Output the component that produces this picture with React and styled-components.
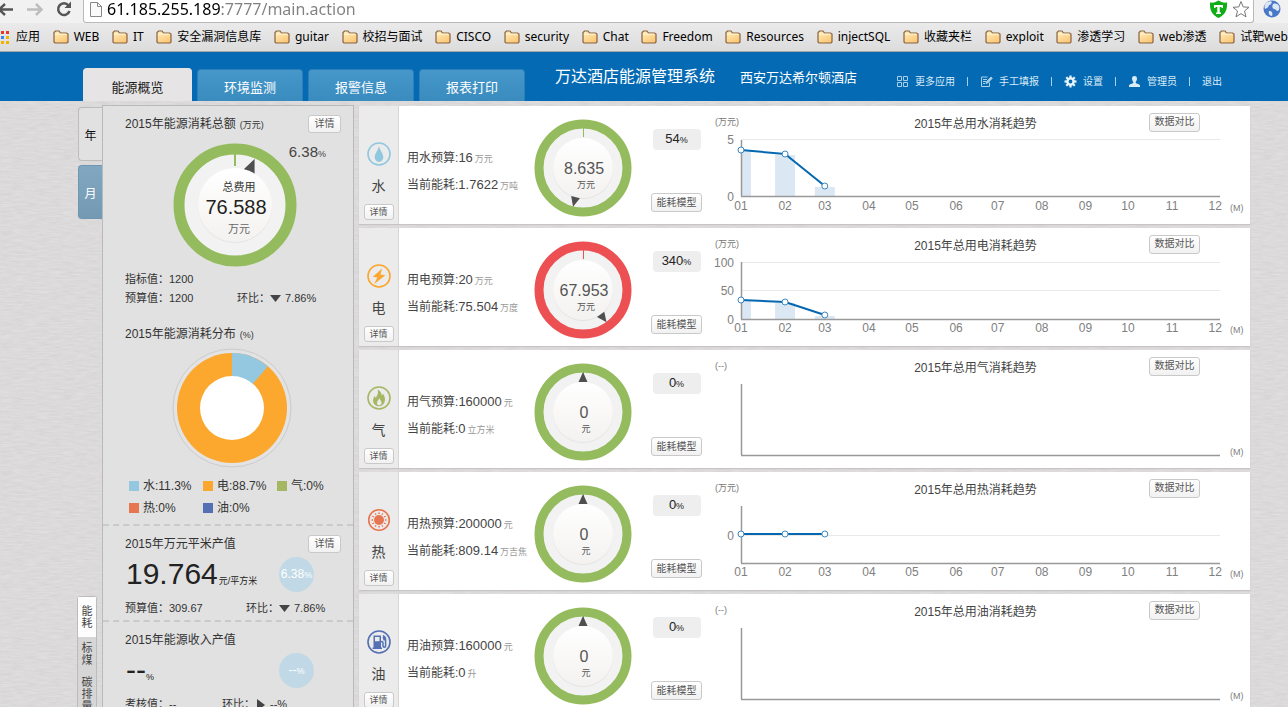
import React from "react";
import styled, { createGlobalStyle } from "styled-components";

const sans = `"Liberation Sans", "Noto Sans CJK SC", sans-serif`;
const chromeSans = `"Noto Sans", "Noto Sans CJK SC", sans-serif`;
const green = "#94bb5e";
const red = "#ec5052";

const paper = `url("data:image/svg+xml,%3Csvg xmlns='http://www.w3.org/2000/svg' width='240' height='240'%3E%3Cfilter id='n'%3E%3CfeTurbulence type='fractalNoise' baseFrequency='0.08 0.6' numOctaves='3' stitchTiles='stitch'/%3E%3CfeColorMatrix values='0 0 0 0 0.45 0 0 0 0 0.43 0 0 0 0 0.44 0.35 0 0 0 -0.08'/%3E%3C/filter%3E%3Crect width='240' height='240' filter='url(%23n)'/%3E%3C/svg%3E")`;

const GlobalStyle = createGlobalStyle`
  * { box-sizing: border-box; }
  html, body { margin: 0; height: 100%; overflow: hidden; }
  body { font-family: ${sans}; font-size: 12px; color: #333; background: #e0dedf; }
  button, input { font-family: inherit; margin: 0; }
  h1, h2, h3, p, ul, dl, dd { margin: 0; padding: 0; font-weight: 400; }
  svg { display: block; }
`;

/* ---------- browser chrome ---------- */
const Toolbar = styled.div`
  display: flex;
  height: 23px;
  background: #f1f1f1;
  font-family: ${chromeSans};
`;
const NavButtons = styled.div`
  display: flex;
  width: 83px;
  justify-content: space-between;
  padding-right: 11px;
`;
const ChromeButton = styled.button`
  display: block;
  border: 0;
  padding: 0;
  background: none;
  height: 19px;
`;
const AddressBar = styled.div`
  display: flex;
  flex: 1;
  gap: 5px;
  padding: 0 3px 0 6px;
  background: #fff;
  border: 1px solid #b9b9b9;
  border-top: 0;
  border-radius: 0 0 3px 3px;
`;
const Address = styled.input`
  flex: 1;
  min-width: 0;
  height: 19px;
  border: 0;
  padding: 0;
  outline: 0;
  font-size: 16px;
  line-height: 19px;
  color: #333;
  background: linear-gradient(90deg, #000 113px, #808080 113px);
  background-clip: text;
  -webkit-text-fill-color: transparent;
`;
const Extensions = styled.div`
  width: 34px;
  padding-left: 9px;
`;
const Bookmarks = styled.nav`
  display: flex;
  justify-content: space-between;
  height: 29px;
  align-items: center;
  overflow: hidden;
  background: linear-gradient(#eaeaea, #dcdcdc);
  border-bottom: 1px solid #a3a5a7;
  font-family: ${chromeSans};
`;
const Bookmark = styled.a`
  display: flex;
  flex: none;
  align-items: center;
  gap: 5px;
  color: #000;
  line-height: 18px;
  text-decoration: none;
  white-space: nowrap;
`;

/* ---------- header ---------- */
const Header = styled.header`
  display: flex;
  height: 49px;
  padding: 0 66px 0 83px;
  background: #046ab3;
  color: #fff;
`;
const Tabs = styled.nav`
  display: flex;
  align-items: flex-end;
  gap: 5px;
`;
const Tab = styled.button`
  width: ${(p) => (p.$active ? 109 : 106)}px;
  height: ${(p) => (p.$active ? 33 : 32)}px;
  padding: 2px 0 0;
  border: 1px solid ${(p) => (p.$active ? "#e6e4e5" : "#2d7fb9")};
  border-bottom: 0;
  border-radius: 4px 4px 0 0;
  background: ${(p) => (p.$active ? "#e6e4e5" : "linear-gradient(#4598c9, #3a8bbe)")};
  color: ${(p) => (p.$active ? "#222" : "#fff")};
  font-size: 13px;
`;
const SystemName = styled.h1`
  margin-left: 30px;
  font-size: 16px;
  line-height: 49px;
  white-space: nowrap;
`;
const HotelName = styled.p`
  margin-left: 25px;
  font-size: 13px;
  line-height: 51px;
  white-space: nowrap;
`;
const Links = styled.nav`
  display: flex;
  align-items: center;
  margin-left: auto;
  padding-top: 10px;
`;
const HeaderLink = styled.a`
  display: flex;
  align-items: center;
  gap: 6px;
  padding-right: 12px;
  color: #d9ebf7;
  font-size: 10px;
  line-height: 14px;
  text-decoration: none;
  white-space: nowrap;
  &:last-child { padding-right: 0; }
  & + &::before {
    content: "";
    width: 1px;
    height: 9px;
    margin-right: 6px;
    background: #a9d0ea;
  }
`;

/* ---------- page ---------- */
const Page = styled.div`
  display: flex;
  flex-direction: column;
  height: 100vh;
  overflow: hidden;
`;
const Main = styled.main`
  display: flex;
  flex: 1;
  align-items: flex-start;
  min-height: 0;
  padding: 4px 38px 0 77px;
  background: ${paper} #e0dedf;
`;
const SideTabs = styled.div`
  width: 25px;
  padding-top: 2px;
`;
const PeriodTab = styled.button`
  display: block;
  width: 24px;
  height: 54px;
  margin: 0 0 4px 1px;
  padding: 0;
  border: 1px solid ${(p) => (p.$active ? "#7096b0" : "#bdbdbd")};
  border-right: 0;
  border-radius: 4px 0 0 4px;
  background: ${(p) => (p.$active ? "linear-gradient(#82a7c1, #7499b3)" : "#e2e1e1")};
  color: ${(p) => (p.$active ? "#fff" : "#111")};
  font-size: 12px;
`;
const MetricTabs = styled.div`
  width: 20px;
  margin-top: 377px;
  border: 1px solid #bcbcbc;
  border-radius: 3px 3px 0 0;
  background: #d7d6d6;
`;
const MetricTab = styled.button`
  display: block;
  width: 18px;
  padding: ${(p) => (p.$active ? 8 : 5)}px 3px;
  border: 0;
  background: ${(p) => (p.$active ? "#fdfdfd" : "transparent")};
  color: #444;
  font-size: 11px;
  line-height: 12px;
`;
const Summary = styled.aside`
  width: 252px;
  flex: none;
  border: 1px solid #b9b9b9;
  background: #e1e1e1;
`;
const Section = styled.section`
  padding: 8px 12px ${(p) => p.$bottom}px 22px;
  border-bottom: 2px dashed #cacaca;
`;
const SectionHead = styled.div`
  display: flex;
  align-items: center;
  justify-content: space-between;
  height: 20px;
  margin-top: ${(p) => p.$top || 0}px;
`;
const SectionTitle = styled.h2`
  font-size: 12px;
  line-height: 20px;
  white-space: nowrap;
`;
const Small = styled.small`
  margin-left: ${(p) => p.$gap || 0}px;
  font-size: 9px;
  color: ${(p) => p.$color || "inherit"};
`;
const Button = styled.button`
  flex: none;
  width: ${(p) => p.$w}px;
  height: ${(p) => p.$h}px;
  padding: 0;
  border: 1px solid #c9c9c9;
  border-radius: 3px;
  background: linear-gradient(#fff, #f1f1f1);
  color: #555;
  font-size: ${(p) => p.$size || 10}px;
  line-height: 14px;
  white-space: nowrap;
`;
const TotalGauge = styled.div`
  position: relative;
  display: flex;
  justify-content: center;
  margin-top: 9px;
  padding-left: 3px;
`;
const Rate = styled.p`
  position: absolute;
  top: 0;
  right: 15px;
  font-size: 15px;
  line-height: 18px;
  color: #444;
`;
const Facts = styled.div`
  margin-top: ${(p) => p.$top}px;
`;
const FactRow = styled.p`
  display: flex;
  font-size: 11px;
  line-height: 19px;
  white-space: nowrap;
`;
const Fact = styled.span`
  display: flex;
  align-items: center;
  width: ${(p) => (p.$w ? p.$w + "px" : "auto")};
`;
const Donut = styled.svg`
  margin: 4px auto 7px 47px;
`;
const Legend = styled.ul`
  display: grid;
  grid-template-columns: 74px 74px 60px;
  padding-left: 4px;
  list-style: none;
`;
const LegendItem = styled.li`
  display: flex;
  align-items: center;
  gap: 4px;
  line-height: 22px;
  white-space: nowrap;
  &::before {
    content: "";
    width: 10px;
    height: 10px;
    background: ${(p) => p.$color};
  }
`;
const FigureRow = styled.div`
  display: flex;
  justify-content: space-between;
  align-items: center;
  height: 40px;
  padding-right: 27px;
`;
const Figure = styled.p`
  padding: 6px 0 0 1px;
  font-size: 30px;
  line-height: 34px;
  color: #222;
  white-space: nowrap;
`;
const Bubble = styled.span`
  width: 35px;
  height: 35px;
  border-radius: 50%;
  background: #c1d9e6;
  color: #fff;
  font-size: 12px;
  line-height: 34px;
  text-align: center;
  white-space: nowrap;
`;

/* ---------- resource cards ---------- */
const Cards = styled.div`
  flex: 1;
  min-width: 0;
  margin: 1px 0 0 5px;
`;
const Card = styled.article`
  display: flex;
  height: 118px;
  margin-bottom: 4px;
  background: #fff;
  box-shadow: 0 1px 1px #c6c4c5;
`;
const Kind = styled.div`
  display: flex;
  flex-direction: column;
  align-items: center;
  width: 40px;
  padding-top: 36px;
  border-right: 1px solid #d6d6d6;
  background: #ebebeb;
`;
const KindName = styled.h3`
  margin: 9px 0 7px;
  font-size: 14px;
  line-height: 22px;
  color: #444;
`;
const Info = styled.div`
  width: 135px;
  padding: 39px 0 0 8px;
  color: #444;
  white-space: nowrap;
`;
const InfoRow = styled.p`
  line-height: 25px;
`;
const Amount = styled.span`
  font-size: 13px;
`;
const GaugeBox = styled.div`
  padding-top: 13px;
`;
const Controls = styled.div`
  display: flex;
  flex-direction: column;
  justify-content: space-between;
  align-items: center;
  margin-left: 19px;
  padding: 23px 0 12px;
`;
const Percent = styled.output`
  width: 48px;
  height: 21px;
  border-radius: 4px;
  background: #eee;
  color: #222;
  font-size: 13px;
  line-height: 20px;
  text-align: center;
`;
const Trend = styled.div`
  flex: 1;
  min-width: 0;
  padding-top: 6px;
`;
const TrendHead = styled.div`
  display: grid;
  grid-template-columns: 1fr auto 1fr;
  align-items: center;
  height: 20px;
  padding: 0 50px 0 13px;
`;
const TrendUnit = styled.span`
  color: #777;
  font-size: 9px;
  line-height: 18px;
`;
const TrendTitle = styled.h3`
  padding-left: 36px;
  font-size: 12px;
  color: #444;
`;
const TrendAction = styled.div`
  display: flex;
  justify-content: flex-end;
`;
const Plot = styled.div`
  margin: 0 30px 0 39px;
`;
const PlotSvg = styled.svg`
  width: 100%;
  height: 85px;
  overflow: visible;
  font-family: ${sans};
`;

/* ---------- drawings ---------- */
const Folder = () => (
  <svg width="16" height="16" viewBox="0 0 16 16">
    <defs>
      <linearGradient id="folder" x2="0.6" y2="1">
        <stop offset="0" stopColor="#fff0c0" />
        <stop offset="1" stopColor="#fbc878" />
      </linearGradient>
    </defs>
    <path d="M1 13V3.5L2.5 2H6l1.5 2H13.5L15 5v8l-1 1H2z" fill="url(#folder)" stroke="#8a6240" strokeWidth="1.2" />
    <path d="M2 5.2h11.5" stroke="#fff6da" />
  </svg>
);

const AppsGrid = () => (
  <svg width="11" height="14" viewBox="0 0 11 14">
    {["#e8392b", "#3d85f0", "#f0b400"].map((c, r) =>
      [-3, 2, 7].map((x, i) => (
        <rect key={x} x={x - 1} y={1 + r * 5} width="3" height="3" fill={r === 1 && i === 2 ? "#f0b400" : c} />
      ))
    )}
  </svg>
);

const Pointer = ({ angle, tip, base, half }) => (
  <path transform={`rotate(${angle})`} d={`M0 ${-tip}L${half} ${-base}H${-half}Z`} fill="#4f4f4f" />
);

const Disc = () => (
  <defs>
    <linearGradient id="disc" x2="0" y2="1">
      <stop offset="0" stopColor="#fff" />
      <stop offset="1" stopColor="#f4f2f0" />
    </linearGradient>
  </defs>
);

const Gauge = ({ color, percent, value, unit }) => (
  <svg width="98" height="98" viewBox="-49 -49 98 98" textAnchor="middle" fill="#555">
    <Disc />
    <circle r="44" fill="#f2f2f2" stroke={color} strokeWidth="9" />
    <rect x="0" y="-40" width="1" height="9" fill={color} />
    <circle r="30" cy="1" fill="#e4e4e4" />
    <circle r="30" fill="url(#disc)" />
    <Pointer angle={percent * 3.6} tip={40} base={30} half={4.5} />
    <text x="1" y="6" fontSize="16">{value}</text>
    <text x="3" y="20" fontSize="9">{unit}</text>
  </svg>
);

const icons = {
  water: (
    <svg width="24" height="24" viewBox="0 0 24 24" fill="#90c8e0">
      <circle cx="12" cy="12" r="11" fill="none" stroke="#90c8e0" strokeWidth="1.600" />
      <path d="M12 3.500c.6 4.500 4.300 8 4.300 11.800a4.300 4.600 0 0 1-8.600 0c0-3.800 3.700-7.300 4.300-11.800z" />
    </svg>
  ),
  power: (
    <svg width="24" height="24" viewBox="0 0 24 24" fill="#fba62f">
      <circle cx="12" cy="12" r="11" fill="none" stroke="#fba62f" strokeWidth="1.600" />
      <path d="M15.200 4.500 5.800 12.800l4.500.6-3.100 6.600 11.200-8.800-5-.7z" />
    </svg>
  ),
  gas: (
    <svg width="24" height="24" viewBox="0 0 24 24" fill="#a6b763">
      <circle cx="12" cy="12" r="11" fill="none" stroke="#a6b763" strokeWidth="1.600" />
      <path d="M10.500 3.500c3.200 1.300 4.200 3.700 4.100 6.100.8-.4 1.200-1.100 1.200-2 1.900 2.600 3 5.700 1.600 8.900-1 2.300-3.100 3.800-5.600 3.800-3.300 0-5.900-2.600-5.700-6 .1-1.900 1-3.300 1.800-4.600.1 1 .4 1.600 1 2 1.300-2.200 3-4.800 1.600-8.200z" />
      <path d="M12.300 12c-.2 2-2.300 2.700-2.300 4.900 0 1.400.9 2.300 2.200 2.300 1.400 0 2.400-.9 2.400-2.400 0-1.700-1.600-2.500-2.300-4.800z" fill="#ebebeb" />
    </svg>
  ),
  heat: (
    <svg width="24" height="24" viewBox="0 0 24 24" fill="#e77550">
      <circle cx="12" cy="12" r="10.300" fill="none" stroke="#e77550" strokeWidth="1.600" />
      <circle cx="12" cy="12" r="5" />
      {Array.from({ length: 12 }, (_, i) => (
        <path key={i} transform={`rotate(${i * 30} 12 12)`} d="M12 3.500l.9 2.500h-1.800z" />
      ))}
    </svg>
  ),
  oil: (
    <svg width="24" height="24" viewBox="0 0 24 24" fill="#5470b4">
      <circle cx="12" cy="12" r="11" fill="none" stroke="#5470b4" strokeWidth="1.600" />
      <path fillRule="evenodd" d="M6.500 5.500h7.500v12h1v1.500H5.500v-1.500h1zM8 7v4.200h4.500V7z" />
      <path d="M14 11.500c2 0 2 .5 2 2.500v2c0 1.500 2.600 1.500 2.600 0V9.500c0-2-1-3-2.600-4" fill="none" stroke="#5470b4" strokeWidth="1.500" />
      <path d="M15.500 7h3v3.500h-2z" />
    </svg>
  ),
};

const LinkIcon = ({ name }) => (
  <svg width="13" height="13" viewBox="0 0 13 13" fill="none" stroke="#a9d0ea">
    {name === "grid" && <path d="M1.500 1.500h4v4h-4zM7.500 1.500h4v4h-4zM1.500 7.500h4v4h-4zM7.500 7.500h4v4h-4z" />}
    {name === "edit" && (
      <>
        <path d="M9.500 7.500v4h-8v-9.500h6M3 4.500h4M3 6.500h3M3 8.500h2" />
        <path d="M6 8.500l.5-1.700L11 2l1.300 1.200L7.700 8z" fill="#a9d0ea" />
      </>
    )}
    {name === "gear" && (
      <g stroke="#eaf5fc">
        <circle cx="6.500" cy="6.500" r="3.100" strokeWidth="2.400" />
        {[0, 45, 90, 135, 180, 225, 270, 315].map((a) => (
          <path key={a} transform={`rotate(${a} 6.5 6.5)`} d="M6.500 0.500v2.500" strokeWidth="2.200" />
        ))}
      </g>
    )}
    {name === "user" && (
      <path stroke="none" fill="#d9ebf7" d="M6.500 1C8.400 1 9 2.300 9 3.800c0 1.400-.6 2.500-1.300 3.200v1c.8.600 4 1 4.300 2.500V12H1v-1.500C1.300 9 4.500 8.600 5.300 8V7C4.600 6.300 4 5.200 4 3.800 4 2.300 4.600 1 6.500 1z" />
    )}
  </svg>
);

const Arrow = ({ right }) => (
  <svg width="15" height="12" viewBox="0 0 15 12" fill="#444">
    <path d={right ? "M2 0l8 6-8 6z" : "M0 2h11L5.500 9z"} />
  </svg>
);

/* ---------- data ---------- */
const bookmarks = ["WEB", "IT", "安全漏洞信息库", "guitar", "校招与面试", "CISCO", "security", "Chat", "Freedom", "Resources", "injectSQL", "收藏夹栏", "exploit", "渗透学习", "web渗透", "试靶web"];
const monthX = [0, 9.2, 17.5, 26.7, 35.7, 44.9, 53.6, 62.8, 71.9, 80.8, 90, 99];

const resources = [
  { icon: "water", name: "水", budget: "16", budgetUnit: "万元", used: "1.7622", usedUnit: "万吨", color: green, percent: 54, value: "8.635", unit: "万元", trendUnit: "(万元)",
    ticks: [["5", 7], ["0", 64]], bottom: 64, points: [18, 22, 54], bars: true },
  { icon: "power", name: "电", budget: "20", budgetUnit: "万元", used: "75.504", usedUnit: "万度", color: red, percent: 340, value: "67.953", unit: "万元", trendUnit: "(万元)",
    ticks: [["100", 8], ["50", 36], ["0", 65]], bottom: 65, points: [46, 48, 61], bars: true },
  { icon: "gas", name: "气", budget: "160000", budgetUnit: "元", used: "0", usedUnit: "立方米", color: green, percent: 0, value: "0", unit: "元", trendUnit: "(--)",
    ticks: [], bottom: 79, points: [] },
  { icon: "heat", name: "热", budget: "200000", budgetUnit: "元", used: "809.14", usedUnit: "万吉焦", color: green, percent: 0, value: "0", unit: "元", trendUnit: "(万元)",
    ticks: [["0", 37]], bottom: 65, points: [36, 36, 36] },
  { icon: "oil", name: "油", budget: "160000", budgetUnit: "元", used: "0", usedUnit: "升", color: green, percent: 0, value: "0", unit: "元", trendUnit: "(--)",
    ticks: [], bottom: 79, points: [] },
];

const Chart = ({ ticks, bottom, points, bars }) => (
  <PlotSvg fontSize="12" fill="#808080">
    {ticks.map(([label, y]) => (
      <g key={label}>
        <line x1="0" x2="100%" y1={y} y2={y} stroke="#e9e9e9" strokeWidth="1" transform="translate(0 .5)" />
        <text x="-7" y={y + 5} textAnchor="end">{label}</text>
      </g>
    ))}
    {bars && points.map((y, i) => (
      <rect key={i} x={`${monthX[i]}%`} y={y + 1} width={i ? 20 : 10} height={bottom - y - 1} transform={i ? "translate(-10 0)" : undefined} fill="#dbe8f3" />
    ))}
    <path d={`M0.500 8V${bottom}`} stroke="#999" strokeWidth="1.500" />
    <line x1="0" x2="100%" y1={bottom + 0.5} y2={bottom + 0.5} stroke="#999" strokeWidth="1.500" />
    {points.slice(1).map((y, i) => (
      <line key={i} x1={`${monthX[i]}%`} y1={points[i]} x2={`${monthX[i + 1]}%`} y2={y} stroke="#0567b0" strokeWidth="2" />
    ))}
    {points.map((y, i) => (
      <circle key={i} cx={`${monthX[i]}%`} cy={y} r="3" fill="#fff" stroke="#3c87bf" />
    ))}
    {ticks.length > 0 && monthX.map((x, i) => (
      <text key={x} x={`${x}%`} y="78" textAnchor="middle">{String(i + 1).padStart(2, "0")}</text>
    ))}
    <text x="100%" dx="10" y="79" fontSize="9">(M)</text>
  </PlotSvg>
);

const ResourceCard = (r) => (
  <Card>
    <Kind>
      {icons[r.icon]}
      <KindName>{r.name}</KindName>
      <Button $w={30} $h={16} $size={9}>详情</Button>
    </Kind>
    <Info>
      <InfoRow>用{r.name}预算:<Amount>{r.budget}</Amount><Small $gap={2} $color="#999">{r.budgetUnit}</Small></InfoRow>
      <InfoRow>当前能耗:<Amount>{r.used}</Amount><Small $gap={2} $color="#999">{r.usedUnit}</Small></InfoRow>
    </Info>
    <GaugeBox><Gauge {...r} /></GaugeBox>
    <Controls>
      <Percent>{r.percent}<Small>%</Small></Percent>
      <Button $w={51} $h={19}>能耗模型</Button>
    </Controls>
    <Trend>
      <TrendHead>
        <TrendUnit>{r.trendUnit}</TrendUnit>
        <TrendTitle>2015年总用{r.name}消耗趋势</TrendTitle>
        <TrendAction><Button $w={51} $h={19}>数据对比</Button></TrendAction>
      </TrendHead>
      <Plot><Chart {...r} /></Plot>
    </Trend>
  </Card>
);

export default function App() {
  return (
    <Page>
      <GlobalStyle />
      <Toolbar>
        <NavButtons>
          <ChromeButton aria-label="后退">
            <svg width="13" height="19" fill="none" stroke="#555" strokeWidth="2.500"><path d="M13 9.500H-1M5 4l-6 5.500L5 15" /></svg>
          </ChromeButton>
          <ChromeButton aria-label="前进">
            <svg width="16" height="19" fill="none" stroke="#bdbdbd" strokeWidth="2.500"><path d="M0 9.500h14M9 4l5.500 5.500L9 15" /></svg>
          </ChromeButton>
          <ChromeButton aria-label="重新加载">
            <svg width="16" height="19" fill="none" stroke="#555" strokeWidth="2.500">
              <path d="M12.500 5.500A5.800 5.800 0 1 0 13.500 11" />
              <path d="M15 1.500V8H8.500z" fill="#555" stroke="none" />
            </svg>
          </ChromeButton>
        </NavButtons>
        <AddressBar>
          <svg width="12" height="19" fill="#fafafa" stroke="#888"><path d="M.5 2.500h7l4 4v10H.5zM7.500 2.500v4h4" /></svg>
          <Address aria-label="地址" defaultValue="61.185.255.189:7777/main.action" />
          <svg width="17" height="19">
            <path d="M0 2.500C4 3 6 2 8.500.5 11 2 13 3 17 2.500 17.500 10 15 15 8.500 18 2 15-.5 10 0 2.500z" fill="#0fae18" />
            <path d="M4 5h9v3h-1.500V7H9.700v5.500H11V14H6v-1.500h1.300V7H5.500v1H4z" fill="#fff" />
          </svg>
          <svg width="18" height="19" fill="#fff" stroke="#777"><path d="M9 1.500l2.200 5.400 5.800.4-4.500 3.700 1.500 5.800L9 13.600l-5 3.200 1.500-5.800L1 7.300l5.800-.4z" /></svg>
        </AddressBar>
        <Extensions>
          <svg width="18" height="19">
            <circle cx="9" cy="9" r="8.500" fill="#4a78c8" />
            <path d="M3 3c3-2 5-2 6-1-1 2-1 3-3 3 0 2-2 3-4 4C1 7 1.500 5 3 3zM10 4c3-1 5 0 6 2 1 2 0 4-1 5-2 0-2-2-4-2-2-1-2-3-1-5zM6 11c3 0 4 2 3 5-2 0-4-2-3-5z" fill="#dce6f5" />
          </svg>
        </Extensions>
      </Toolbar>
      <Bookmarks>
        <Bookmark href="#apps"><AppsGrid />应用</Bookmark>
        {bookmarks.map((b) => (
          <Bookmark href="#bookmark" key={b}><Folder />{b}</Bookmark>
        ))}
      </Bookmarks>
      <Header>
        <Tabs>
          <Tab $active>能源概览</Tab>
          <Tab>环境监测</Tab>
          <Tab>报警信息</Tab>
          <Tab>报表打印</Tab>
        </Tabs>
        <SystemName>万达酒店能源管理系统</SystemName>
        <HotelName>西安万达希尔顿酒店</HotelName>
        <Links>
          <HeaderLink href="#apps"><LinkIcon name="grid" />更多应用</HeaderLink>
          <HeaderLink href="#report"><LinkIcon name="edit" />手工填报</HeaderLink>
          <HeaderLink href="#settings"><LinkIcon name="gear" />设置</HeaderLink>
          <HeaderLink href="#admin"><LinkIcon name="user" />管理员</HeaderLink>
          <HeaderLink href="#logout">退出</HeaderLink>
        </Links>
      </Header>
      <Main>
        <SideTabs>
          <PeriodTab>年</PeriodTab>
          <PeriodTab $active>月</PeriodTab>
          <MetricTabs>
            <MetricTab $active>能耗</MetricTab>
            <MetricTab>标煤</MetricTab>
            <MetricTab>碳排量</MetricTab>
          </MetricTabs>
        </SideTabs>
        <Summary>
          <Section $bottom={5}>
            <SectionHead>
              <SectionTitle>2015年能源消耗总额<Small $gap={4}>(万元)</Small></SectionTitle>
              <Button $w={33} $h={18}>详情</Button>
            </SectionHead>
            <TotalGauge>
              <svg width="124" height="124" viewBox="-62 -62 124 124" textAnchor="middle">
                <Disc />
                <circle r="56" fill="#f2f2f2" stroke={green} strokeWidth="11" />
                <rect x="-1" y="-51" width="2" height="12" fill={green} />
                <Pointer angle={23} tip={50} base={36} half={6} />
                <circle r="37" cy="1" fill="#e4e4e4" />
                <circle r="37" fill="url(#disc)" />
                <text x="4" y="-14" fontSize="11" fill="#333">总费用</text>
                <text x="1" y="9" fontSize="20" fill="#222">76.588</text>
                <text x="4" y="28" fontSize="11" fill="#666">万元</text>
              </svg>
              <Rate>6.38<Small>%</Small></Rate>
            </TotalGauge>
            <Facts $top={3}>
              <FactRow>指标值：1200</FactRow>
              <FactRow><Fact $w={112}>预算值：1200</Fact><Fact>环比：<Arrow />7.86%</Fact></FactRow>
            </Facts>
            <SectionHead $top={16}>
              <SectionTitle>2015年能源消耗分布<Small $gap={4}>(%)</Small></SectionTitle>
            </SectionHead>
            <Donut width="120" height="120" viewBox="-60 -60 120 120">
              <circle r="59" fill="#e3e3e3" stroke="#cbcbcb" />
              <circle r="55" fill="#fca72e" />
              <path d="M0 0V-55A55 55 0 0 1 35.900-41.700Z" fill="#94c8e0" />
              <circle r="32" fill="#fff" />
            </Donut>
            <Legend>
              <LegendItem $color="#94c8e0">水:11.3%</LegendItem>
              <LegendItem $color="#fca72e">电:88.7%</LegendItem>
              <LegendItem $color="#a6b763">气:0%</LegendItem>
              <LegendItem $color="#e77550">热:0%</LegendItem>
              <LegendItem $color="#5470b4">油:0%</LegendItem>
            </Legend>
          </Section>
          <Section $bottom={2}>
            <SectionHead>
              <SectionTitle>2015年万元平米产值</SectionTitle>
              <Button $w={33} $h={18}>详情</Button>
            </SectionHead>
            <FigureRow>
              <Figure>19.764<Small $gap={1}>元/平方米</Small></Figure>
              <Bubble>6.38<Small>%</Small></Bubble>
            </FigureRow>
            <Facts $top={5}>
              <FactRow><Fact $w={121}>预算值：309.67</Fact><Fact>环比：<Arrow />7.86%</Fact></FactRow>
            </Facts>
          </Section>
          <Section $bottom={2}>
            <SectionHead>
              <SectionTitle>2015年能源收入产值</SectionTitle>
            </SectionHead>
            <FigureRow>
              <Figure>--<Small>%</Small></Figure>
              <Bubble>--<Small>%</Small></Bubble>
            </FigureRow>
            <Facts $top={5}>
              <FactRow><Fact $w={97}>考核值：--</Fact><Fact>环比：<Arrow right />--%</Fact></FactRow>
            </Facts>
          </Section>
        </Summary>
        <Cards>
          {resources.map((r) => <ResourceCard key={r.icon} {...r} />)}
        </Cards>
      </Main>
    </Page>
  );
}
